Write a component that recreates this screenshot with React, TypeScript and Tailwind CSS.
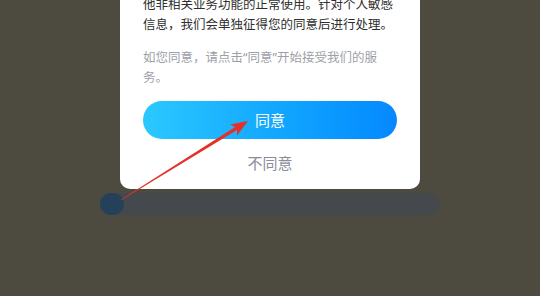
export default function App() {
  return (
    <div
      className="relative h-[296px] w-[540px] overflow-hidden bg-[#4d4a3f]"
      style={{ fontFamily: '"Noto Sans", "Noto Sans CJK SC", sans-serif' }}
    >
      <div className="flex flex-col items-center">
        {/* Dialog card (top cut off) */}
        <div className="w-[300px] rounded-b-[10px] bg-white px-[23px] pb-[16px]">
          <p className="-mt-[5px] text-[12.5px] leading-[20px] text-[#2e2e2e]">
            他非相关业务功能的正常使用。针对个人敏感信息，我们会单独征得您的同意后进行处理。
          </p>
          <p className="mt-[13px] text-[12.5px] leading-[20px] text-[#9c9fa8]">
            如您同意，请点击“同意”开始接受我们的服务。
          </p>
          <button className="mt-[13px] flex h-[38px] w-full items-center justify-center rounded-full bg-gradient-to-r from-[#2bc8ff] to-[#0688ff] text-[15px] text-white">
            同意
          </button>
          <div className="mt-[14px] text-center text-[15px] leading-[20px] text-[#8a8d99]">
            不同意
          </div>
        </div>

        {/* Bottom bar */}
        <div className="mt-[4px] flex h-[22px] w-[340px] rounded-full bg-[#45484c]">
          <div className="h-full w-[24px] rounded-full bg-[#24405a]" />
        </div>
      </div>

      {/* Red annotation arrow */}
      <svg
        className="pointer-events-none absolute left-0 top-0"
        width="540"
        height="296"
        viewBox="0 0 540 296"
      >
        <polygon
          points="120.8,199.7 235.15,126.9 230.2,124.5 248,121 237,135.5 237.05,129.9 121.2,200.3"
          fill="#e5302a"
        />
      </svg>
    </div>
  );
}
